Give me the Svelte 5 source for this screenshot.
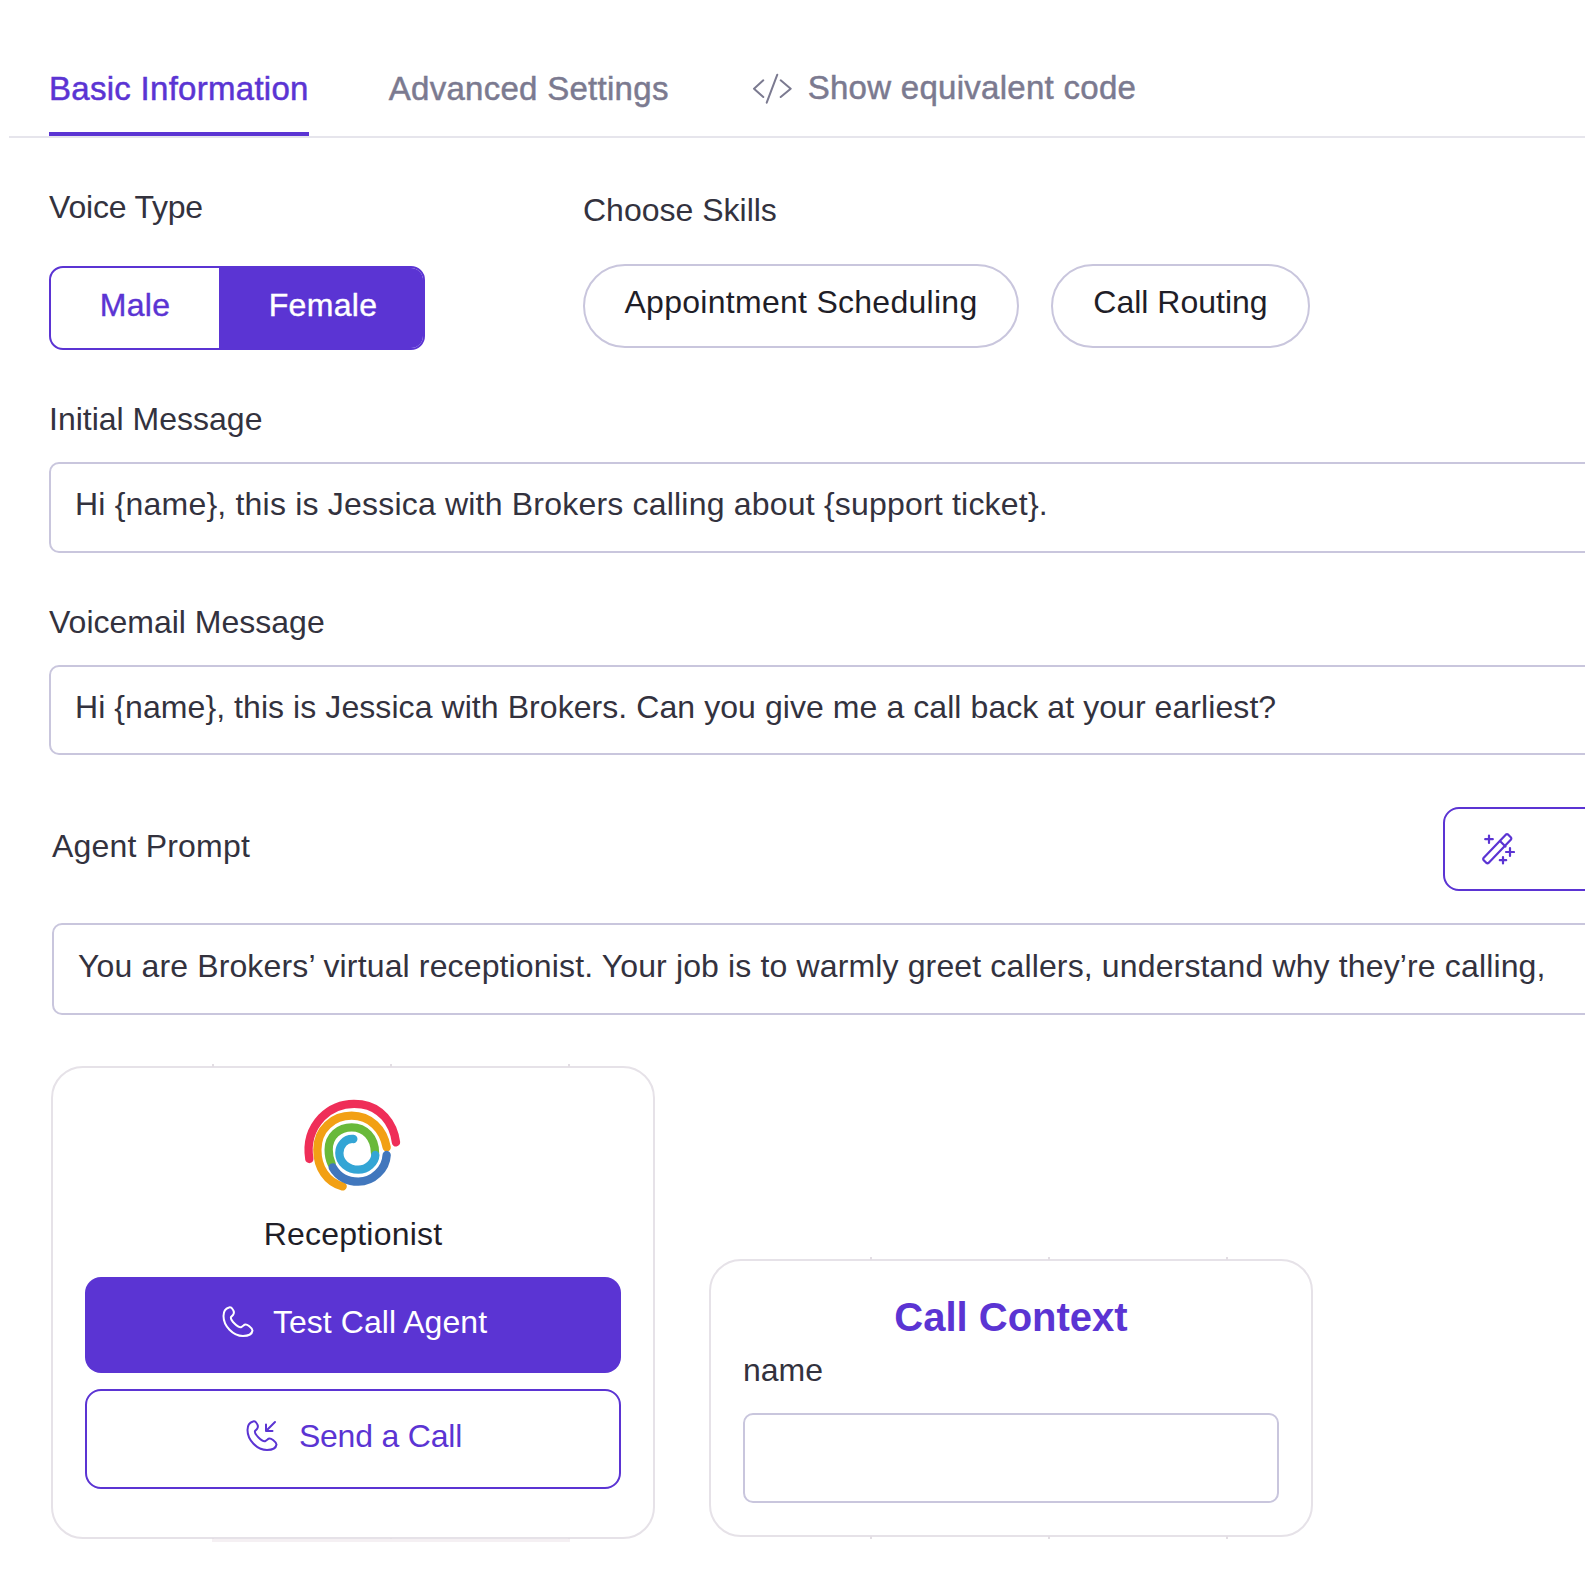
<script>
  const tabs = [
    { label: 'Basic Information', active: true },
    { label: 'Advanced Settings', active: false }
  ];
  const ticks = [159, 337, 515];
  const phone = 'M7 1.5C3.5 2.5 1.5 5.5 1.5 10C1.5 20 11 30 21 30C26 30 30 28 30.5 24.5C30.5 22.5 29 21.5 27 20C25 18.5 23 18 21.5 19.5L19.5 21C18 21.5 15 20 12.5 17.5C10 15 8.5 12.5 9 11L11 9C12.5 7 12 5 10.5 3C9.5 1.5 8.5 1 7 1.5Z';
</script>

<div class="page">
  <nav class="tabs">
    {#each tabs as tab}
      <span class="tab" class:active={tab.active}>{tab.label}</span>
    {/each}
    <span class="code-tab">
      <svg width="40" height="32" viewBox="0 0 40 32" fill="none" stroke="currentColor" stroke-width="2" stroke-linecap="round" stroke-linejoin="round">
        <path d="M11.3 8.3L2 16.7L11.3 25" /><path d="M25.3 2.7L14.7 30.7" /><path d="M28.7 8.3L38.7 16.7L28.7 25" />
      </svg>
      Show equivalent code
    </span>
  </nav>

  <section class="top-row">
    <div class="voice">
      <div class="label voice-label">Voice Type</div>
      <div class="toggle">
        <span class="opt">Male</span>
        <span class="opt on">Female</span>
      </div>
    </div>
    <div class="skills">
      <div class="label">Choose Skills</div>
      <div class="pills">
        <span class="pill wide">Appointment Scheduling</span>
        <span class="pill">Call Routing</span>
      </div>
    </div>
  </section>

  <div class="label msg-label">Initial Message</div>
  <div class="field first">Hi &#123;name&#125;, this is Jessica with Brokers calling about &#123;support ticket&#125;.</div>

  <div class="label vm-label">Voicemail Message</div>
  <div class="field vm">Hi &#123;name&#125;, this is Jessica with Brokers. Can you give me a call back at your earliest?</div>

  <div class="prompt">
    <div class="prompt-head">
      <div class="label">Agent Prompt</div>
      <button class="wand" aria-label="Improve prompt">
        <svg width="34" height="32" viewBox="0 0 34 32" fill="none" stroke="currentColor" stroke-width="2.2" stroke-linecap="round" stroke-linejoin="round">
          <path d="M2.5 25L25 1.5Q26 .8 27 1.5L30 4.5Q30.6 5.5 30 6.5L7.5 30Q6.5 30.6 5.5 30L2.5 27Q1.9 26 2.5 25Z" />
          <path d="M19 8L24.5 13.5" />
          <path d="M8 2.5V10M4.2 6.2H11.8" /><path d="M29 15V23M25 19H33" /><path d="M22 24V30.5M18.8 27.2H25.2" />
        </svg>
      </button>
    </div>
    <div class="field tall">You are Brokers’ virtual receptionist. Your job is to warmly greet callers, understand why they’re calling,</div>
  </div>

  <section class="cards">
    <article class="card agent">
      {#each ticks as t}
        <i class="tick up" style="left: {t}px"></i>
        <i class="tick down" style="left: {t}px"></i>
      {/each}
      <i class="strip"></i>
      <svg class="logo" width="140" height="130" viewBox="0 0 420 390" fill="none" stroke-linecap="round" stroke-width="25">
        <path stroke="#EF2E58" d="M88 240C80 190 92 150 125 115C160 80 200 70 245 76C300 84 340 130 348 190" />
        <path stroke="#F2A014" d="M188 322C140 310 112 265 112 212C112 150 160 110 215 110C270 110 310 150 320 205" />
        <path stroke="#69B93A" d="M155 255C148 240 146 225 146 212C146 170 178 145 215 145C255 145 285 175 285 222" />
        <path stroke="#4177BD" d="M158 265C175 295 205 308 235 308C280 308 318 270 320 228" />
        <path stroke="#33A5D5" d="M220 180C195 178 178 200 178 222C178 252 205 272 235 272C262 272 285 250 286 228" />
      </svg>
      <div class="role">Receptionist</div>
      <button class="btn primary">
        <svg width="32" height="32" viewBox="0 0 32 32" fill="none" stroke="currentColor" stroke-width="2" stroke-linejoin="round"><path d={phone} /></svg>
        Test Call Agent
      </button>
      <button class="btn outline">
        <svg width="32" height="32" viewBox="0 0 32 32" fill="none" stroke="currentColor" stroke-width="2" stroke-linejoin="round" stroke-linecap="round">
          <path d={phone} /><path d="M29 2L20 11M20 4.5V11H26.5" />
        </svg>
        Send a Call
      </button>
    </article>

    <article class="card context">
      {#each ticks as t}
        <i class="tick up" style="left: {t}px"></i>
        <i class="tick down" style="left: {t}px"></i>
      {/each}
      <h2>Call Context</h2>
      <div class="label ctx-label">name</div>
      <div class="ctx-input"></div>
    </article>
  </section>
</div>

<style>
  :global(body) { margin: 0; background: #fff; }
  .page {
    width: 1585px; height: 1585px; overflow: hidden; box-sizing: border-box;
    padding: 65px 0 0 9px;
    font-family: "Liberation Sans", Arial, sans-serif; font-size: 32px; color: #33323e;
  }
  .tabs {
    display: flex; align-items: flex-start; height: 73px; box-sizing: border-box;
    padding-left: 40px; border-bottom: 2px solid #e6e5ec;
    font-size: 33px; letter-spacing: .28px;
  }
  .tab {
    height: 71px; line-height: 48px; box-sizing: border-box; margin-right: 80px;
    color: #7b7a90; -webkit-text-stroke: .5px currentColor;
  }
  .tab.active { color: #5b34d3; border-bottom: 4px solid #5b34d3; }
  .code-tab {
    display: flex; align-items: center; gap: 16px; height: 46px; margin-left: 3px;
    color: #7b7a90; -webkit-text-stroke: .5px currentColor;
  }
  .top-row { display: flex; padding: 49px 0 0 40px; }
  .voice { width: 534px; }
  .voice-label { letter-spacing: -.2px; }
  .label { line-height: 40px; }
  .toggle {
    display: flex; width: 376px; height: 84px; margin-top: 39px; box-sizing: border-box;
    border: 2px solid #5b34d3; border-radius: 14px; overflow: hidden;
    color: #5b34d3; -webkit-text-stroke: .4px currentColor; letter-spacing: .3px;
  }
  .opt { display: flex; align-items: center; justify-content: center; width: 168px; padding-bottom: 6px; }
  .opt.on { flex: 1; background: #5b34d3; color: #fff; padding-left: 4px; }
  .skills { padding-top: 3px; }
  .pills { display: flex; gap: 32px; margin-top: 34px; }
  .pill {
    display: flex; align-items: center; justify-content: center; height: 84px; width: 259px; box-sizing: border-box;
    border: 2px solid #c9c6dd; border-radius: 42px; color: #1f1e28; padding-bottom: 7px;
  }
  .pill.wide { width: 436px; letter-spacing: .28px; }
  .msg-label { margin: 49px 0 0 40px; }
  .vm-label { margin: 49px 0 0 40px; }
  .field {
    margin: 23px 0 0 40px; width: 1700px; height: 91px; box-sizing: border-box;
    border: 2px solid #c9c6dd; border-radius: 10px; padding: 0 24px; line-height: 81px; white-space: nowrap;
  }
  .field.first { letter-spacing: .2px; }
  .field.vm { height: 90px; letter-spacing: .07px; }
  .prompt { margin: 52px 0 0 43px; }
  .prompt-head { display: flex; align-items: flex-start; justify-content: space-between; width: 1700px; }
  .prompt-head .label { margin-top: 19px; letter-spacing: .2px; }
  .wand {
    display: flex; align-items: center;
    margin-right: 49px; width: 260px; height: 84px; box-sizing: border-box; padding: 0 0 0 36px;
    border: 2px solid #5b34d3; border-radius: 16px; background: #fff; color: #5b34d3;
  }
  .prompt .field { margin: 32px 0 0; height: 92px; letter-spacing: .14px; line-height: 83px; }
  .cards { display: flex; align-items: flex-end; gap: 54px; margin: 51px 0 0 42px; }
  .card {
    position: relative;
    width: 604px; box-sizing: border-box; border: 2px solid #e6e2e8; border-radius: 32px; padding: 0 32px;
    display: flex; flex-direction: column;
  }
  .tick { position: absolute; width: 2px; height: 3px; background: #e3dee4; }
  .tick.up { top: -4px; }
  .tick.down { bottom: -4px; }
  .strip { position: absolute; left: 159px; width: 358px; bottom: -5px; height: 3px; background: #f5f0f3; }
  .agent { height: 473px; }
  .logo { display: block; align-self: center; margin: 11px 0 0 -7px; }
  .role { text-align: center; color: #1f1e28; line-height: 40px; margin-top: 5px; letter-spacing: .2px; }
  .btn {
    display: flex; align-items: center; justify-content: center; font: inherit; box-sizing: border-box;
    border-radius: 16px; padding: 0 0 6px;
  }
  .primary { gap: 19px; height: 96px; margin-top: 23px; background: #5b34d3; color: #fff; border: 0; letter-spacing: .05px; padding-left: 3px; }
  .outline { gap: 21px; height: 100px; margin-top: 16px; background: #fff; color: #5b34d3; border: 2px solid #5b34d3; letter-spacing: -.2px; padding-left: 2px; }
  .context { height: 278px; margin-bottom: 2px; }
  h2 { margin: 33px 0 0; font-size: 40px; line-height: 46px; font-weight: 700; text-align: center; color: #5b34d3; }
  .ctx-label { margin-top: 10px; }
  .ctx-input { height: 90px; margin-top: 23px; box-sizing: border-box; border: 2px solid #c9c6dd; border-radius: 10px; }
</style>
